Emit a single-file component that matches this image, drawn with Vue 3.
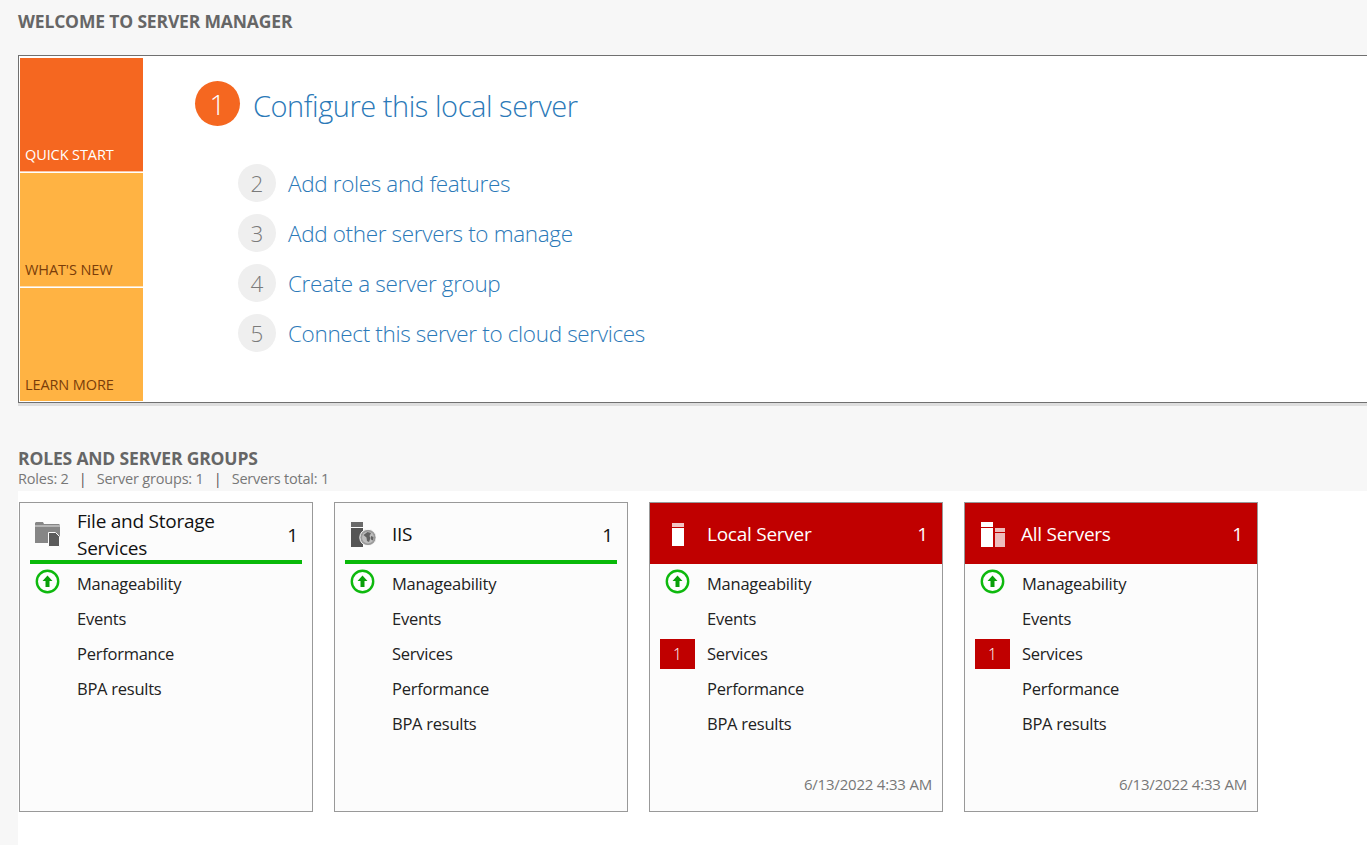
<script setup>
const steps = [
  { n: 2, label: 'Add roles and features' },
  { n: 3, label: 'Add other servers to manage' },
  { n: 4, label: 'Create a server group' },
  { n: 5, label: 'Connect this server to cloud services' }
]
const tiles = [
  { label: 'QUICK START', active: true },
  { label: "WHAT'S NEW", active: false },
  { label: 'LEARN MORE', active: false }
]
const cards = [
  { title: 'File and Storage Services', icon: 'files', alert: false, count: 1, rows: [
    { label: 'Manageability', ok: true }, { label: 'Events' }, { label: 'Performance' }, { label: 'BPA results' } ] },
  { title: 'IIS', icon: 'iis', alert: false, count: 1, rows: [
    { label: 'Manageability', ok: true }, { label: 'Events' }, { label: 'Services' }, { label: 'Performance' }, { label: 'BPA results' } ] },
  { title: 'Local Server', icon: 'local', alert: true, count: 1, time: '6/13/2022 4:33 AM', rows: [
    { label: 'Manageability', ok: true }, { label: 'Events' }, { label: 'Services', badge: 1 }, { label: 'Performance' }, { label: 'BPA results' } ] },
  { title: 'All Servers', icon: 'all', alert: true, count: 1, time: '6/13/2022 4:33 AM', rows: [
    { label: 'Manageability', ok: true }, { label: 'Events' }, { label: 'Services', badge: 1 }, { label: 'Performance' }, { label: 'BPA results' } ] }
]
</script>

<template>
  <div class="page">
    <h2 class="welcome">WELCOME TO SERVER MANAGER</h2>

    <section class="panel">
      <div class="tiles">
        <div v-for="t in tiles" :key="t.label" class="tile" :class="{ active: t.active }">{{ t.label }}</div>
      </div>
      <div class="steps">
        <div class="step-main">
          <span class="circle-main">1</span>
          <span class="main-link">Configure this local server</span>
        </div>
        <div class="step-list">
          <div v-for="s in steps" :key="s.n" class="step">
            <span class="circle">{{ s.n }}</span>
            <span class="link">{{ s.label }}</span>
          </div>
        </div>
      </div>
    </section>

    <h2 class="roles">ROLES AND SERVER GROUPS</h2>
    <div class="summary">
      <span>Roles: 2</span><span class="sep">|</span><span>Server groups: 1</span><span class="sep">|</span><span>Servers total: 1</span>
    </div>

    <section class="cards">
      <article v-for="c in cards" :key="c.title" class="card">
        <header class="card-head" :class="{ alert: c.alert }">
          <span class="icon-box" :class="'icon-' + c.icon">
            <svg v-if="c.icon === 'files'" width="25" height="25" viewBox="0 0 25 25">
              <path d="M0 1 1 0h7l1 2h15l1 1v18H0z" fill="#868686" />
              <path d="M0 4h25" stroke="#e4e4e4" stroke-width="1" />
              <path d="M13.5 10.5h7l4 4v10h-11z" fill="#5b5b5b" stroke="#fcfcfc" stroke-width="1" />
            </svg>
            <svg v-else-if="c.icon === 'iis'" width="25" height="25" viewBox="0 0 25 25">
              <rect x="0" y="0" width="12" height="5" fill="#6a6a6a" />
              <rect x="0" y="6" width="12" height="19" fill="#555" />
              <circle cx="17" cy="15.5" r="8.2" fill="#9a9a9a" stroke="#fcfcfc" stroke-width="1" />
              <circle cx="17" cy="15.5" r="6" fill="#bdbdbd" />
              <path d="M12.5 13l4-3 3.5 1-1.5 3 1 2-1.5 4-2-1-.5-3.5zM20 14l2.5 1-.5 3.5-2-1z" fill="#626262" />
            </svg>
            <svg v-else-if="c.icon === 'local'" width="12" height="23" viewBox="0 0 12 23">
              <rect x="0" y="0" width="12" height="4" fill="#f2c5c5" />
              <rect x="0" y="5" width="12" height="18" fill="#fff" />
            </svg>
            <svg v-else width="24" height="25" viewBox="0 0 24 25">
              <rect x="0" y="0" width="12" height="5" fill="#fff" />
              <rect x="0" y="6" width="12" height="19" fill="#fff" />
              <rect x="14" y="6" width="10" height="4" fill="#eebcbc" />
              <rect x="14" y="11" width="10" height="14" fill="#eebcbc" />
            </svg>
          </span>
          <span class="card-title">{{ c.title }}</span>
          <span class="card-count">{{ c.count }}</span>
        </header>
        <ul class="rows">
          <li v-for="r in c.rows" :key="r.label" class="row">
            <span class="row-mark">
              <svg v-if="r.ok" width="25" height="25" viewBox="0 0 25 25">
                <circle cx="12.5" cy="12.5" r="10.7" fill="#fff" stroke="#0eb90e" stroke-width="2.4" />
                <path d="M12.5 6.5l5 5.5h-3v6h-4v-6h-3z" fill="#0aa00a" />
              </svg>
              <span v-else-if="r.badge" class="badge">{{ r.badge }}</span>
            </span>
            <span class="row-label">{{ r.label }}</span>
          </li>
        </ul>
        <footer v-if="c.time" class="card-time">{{ c.time }}</footer>
      </article>
    </section>
  </div>
</template>

<style>
html, body { margin: 0; background: #f7f7f7; overflow: hidden; }
</style>

<style scoped>
.page {
  height: 845px;
  padding-left: 18px;
  box-sizing: border-box;
  display: flex;
  flex-direction: column;
  font-family: "Open Sans", "Noto Sans", sans-serif;
  overflow: hidden;
}
.welcome, .roles {
  margin: 0;
  font-size: 17.5px;
  font-weight: 700;
  color: #666;
  letter-spacing: -0.16px;
  line-height: 22px;
  flex: none;
}
.welcome { padding-top: 10px; height: 55px; box-sizing: border-box; }
.panel {
  height: 348px;
  flex: none;
  box-sizing: border-box;
  border: 1px solid #707070;
  border-right: 0;
  background: #fff;
  display: flex;
  padding: 2px 0 1px 1px;
  box-shadow: 0 3px 0 #dedede;
}
.tiles { width: 123px; display: flex; flex-direction: column; gap: 1px; }
.tile {
  flex: 1;
  background: #ffb343;
  color: #7a3d0a;
  font-size: 14.5px;
  letter-spacing: -0.1px;
  line-height: 18px;
  display: flex;
  align-items: flex-end;
  padding: 0 0 7px 5px;
  border-bottom: 1px solid #fde0b5;
}
.tile.active { background: #f56720; color: #fff; border-bottom-color: #fbc7a6; }
.tile:last-child { border-bottom: 0; }
.steps { padding: 24px 0 0 52px; }
.step-main { display: flex; align-items: center; gap: 13px; height: 46px; }
.circle-main {
  width: 45px; height: 45px; border-radius: 50%;
  background: #f56720; color: #fff;
  font-size: 28px; font-weight: 300;
  display: flex; align-items: center; justify-content: center;
  margin-top: -3px;
}
.main-link { font-size: 29px; font-weight: 300; color: #2b79b8; letter-spacing: -0.45px; white-space: nowrap; }
.step-list { padding: 36px 0 0 43px; display: flex; flex-direction: column; gap: 12px; }
.step { display: flex; align-items: center; gap: 12px; height: 38px; }
.circle {
  width: 38px; height: 38px; border-radius: 50%;
  background: #efefef; color: #7a7a7a;
  font-size: 22.5px; font-weight: 300;
  display: flex; align-items: center; justify-content: center;
}
.link { font-size: 22.5px; font-weight: 300; color: #2b79b8; letter-spacing: -0.35px; white-space: nowrap; }
.roles { padding-top: 44px; height: 66px; box-sizing: border-box; }
.summary {
  font-size: 14.5px; color: #777; line-height: 20px; height: 22px; flex: none;
  letter-spacing: -0.2px; display: flex;
}
.sep { width: 28px; text-align: center; color: #555; }
.cards {
  flex: 1;
  background: #fff;
  padding: 11px 0 0 1px;
  display: flex;
  gap: 21px;
  align-items: flex-start;
}
.card {
  width: 294px; height: 310px; flex: none;
  box-sizing: border-box;
  border: 1px solid #999;
  background: #fcfcfc;
  position: relative;
}
.card-head {
  height: 61px; box-sizing: border-box;
  margin: 0 10px; padding: 6px 0 0 0;
  border-bottom: 4px solid #09b909;
  display: flex; align-items: center;
  color: #111;
}
.card-head.alert {
  margin: 0; padding: 1px 10px 0;
  background: #c00000; color: #fff; border-bottom: 0;
}
.icon-box { width: 47px; flex: none; box-sizing: border-box; display: flex; padding-left: 5px; }
.icon-iis { padding-left: 6px; }
.icon-local { padding-left: 12px; }
.icon-all { padding-left: 6px; width: 46px; }
.card-title { flex: 1; font-size: 19px; line-height: 27px; letter-spacing: -0.25px; padding-right: 30px; }
.card-count { font-size: 19px; margin-right: 4px; }
.rows { list-style: none; margin: 0; padding: 2px 0 0 10px; }
.row { height: 35px; display: flex; align-items: center; }
.row-mark { width: 47px; flex: none; display: flex; justify-content: flex-start; }
.row-mark svg { margin: -4px 0 0 5px; display: block; }
.row-label { font-size: 16.5px; color: #222; letter-spacing: -0.25px; }
.badge {
  width: 35px; height: 30px; background: #c00000; color: #fff;
  font-size: 15.5px; display: flex; align-items: center; justify-content: center;
  font-weight: 300;
}
.card-time {
  position: absolute; right: 10px; bottom: 17px;
  font-size: 15px; color: #777; letter-spacing: -0.2px;
}
</style>
